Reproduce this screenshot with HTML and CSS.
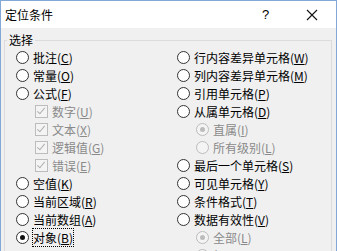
FILE: index.html
```html
<!DOCTYPE html>
<html lang="zh-CN">
<head>
    <meta charset="UTF-8">
    <title>定位条件</title>
    <link rel="stylesheet" href="styles.css">
</head>
<body>

<div class="dialog">
    <!-- Title bar -->
    <div class="titlebar">
        <span class="title">定位条件</span>
        <span class="help">?</span>
        <span class="close">
            <svg width="12" height="12" viewBox="0 0 12 12"><path d="M1 1L11 11M11 1L1 11" stroke="#111" stroke-width="1.1"/></svg>
        </span>
    </div>

    <div class="content">
        <div class="group">
            <span class="legend">选择</span>
            <div class="cols">
                <!-- Left column -->
                <div class="col left">
                    <div class="opt"><span class="radio"></span>批注(<u>C</u>)</div>
                    <div class="opt"><span class="radio"></span>常量(<u>O</u>)</div>
                    <div class="opt"><span class="radio"></span>公式(<u>F</u>)</div>
                    <div class="opt sub disabled"><span class="check"></span>数字(<u>U</u>)</div>
                    <div class="opt sub disabled"><span class="check"></span>文本(<u>X</u>)</div>
                    <div class="opt sub disabled"><span class="check"></span>逻辑值(<u>G</u>)</div>
                    <div class="opt sub disabled"><span class="check"></span>错误(<u>E</u>)</div>
                    <div class="opt"><span class="radio"></span>空值(<u>K</u>)</div>
                    <div class="opt"><span class="radio"></span>当前区域(<u>R</u>)</div>
                    <div class="opt"><span class="radio"></span>当前数组(<u>A</u>)</div>
                    <div class="opt"><span class="radio on"></span><span class="focus">对象(<u>B</u>)</span></div>
                </div>
                <!-- Right column -->
                <div class="col right">
                    <div class="opt"><span class="radio"></span>行内容差异单元格(<u>W</u>)</div>
                    <div class="opt"><span class="radio"></span>列内容差异单元格(<u>M</u>)</div>
                    <div class="opt"><span class="radio"></span>引用单元格(<u>P</u>)</div>
                    <div class="opt"><span class="radio"></span>从属单元格(<u>D</u>)</div>
                    <div class="opt sub disabled"><span class="radio on"></span>直属(<u>I</u>)</div>
                    <div class="opt sub disabled"><span class="radio"></span>所有级别(<u>L</u>)</div>
                    <div class="opt"><span class="radio"></span>最后一个单元格(<u>S</u>)</div>
                    <div class="opt"><span class="radio"></span>可见单元格(<u>Y</u>)</div>
                    <div class="opt"><span class="radio"></span>条件格式(<u>T</u>)</div>
                    <div class="opt"><span class="radio"></span>数据有效性(<u>V</u>)</div>
                    <div class="opt sub disabled"><span class="radio on"></span>全部(<u>L</u>)</div>
                    <div class="opt sub disabled"><span class="radio"></span>相同(<u>E</u>)</div>
                </div>
            </div>
        </div>
    </div>
</div>

</body>
</html>
```

FILE: styles.css
```css
body {
    margin: 0;
    font-family: "Noto Sans CJK SC", "Noto Sans", sans-serif;
    font-size: 12px;
    color: #000;
    background: #f0f0f0;
}

.dialog {
    width: 337px;
    height: 251px;
    box-sizing: border-box;
    border: 1px solid #83a8d8;
    border-bottom: none;
    background: #f0f0f0;
    overflow: hidden;
}

.titlebar {
    height: 27px;
    background: #fff;
    display: flex;
    align-items: center;
    padding-left: 4px;
}

.title {
    flex: 1;
    font-size: 12px;
}

.help {
    width: 20px;
    font-family: "Liberation Sans", sans-serif;
    font-size: 13px;
    margin-right: 24px;
}

.close {
    width: 30px;
    display: flex;
}

.content {
    padding: 5px 4px 0 3px;
}

.group {
    position: relative;
    border: 1px solid #dcdcdc;
    margin-top: 7px;
    height: 240px;
    padding: 7px 0 0 0;
}

.legend {
    position: absolute;
    top: -10px;
    left: 2px;
    padding: 0 2px;
    background: #f0f0f0;
    line-height: 18px;
}

.cols {
    display: flex;
}

.col {
    display: flex;
    flex-direction: column;
}

.col.left {
    width: 161px;
    padding-left: 11px;
}

.opt {
    height: 18px;
    display: flex;
    align-items: center;
    white-space: nowrap;
}

.opt u {
    text-decoration: underline;
    text-underline-offset: 1px;
}

.opt.sub {
    padding-left: 19px;
}

.disabled {
    color: #8a8a8a;
}

.radio {
    width: 11px;
    height: 11px;
    border: 1px solid #333;
    border-radius: 50%;
    background: #fff;
    margin-right: 4px;
    position: relative;
    flex: none;
}

.radio.on::after {
    content: "";
    position: absolute;
    left: 3px;
    top: 3px;
    width: 5px;
    height: 5px;
    border-radius: 50%;
    background: #111;
}

.disabled .radio {
    border-color: #bcbcbc;
    background: #f4f4f4;
}

.disabled .radio.on::after {
    background: #bcbcbc;
}

.check {
    width: 11px;
    height: 11px;
    border: 1px solid #bcbcbc;
    background: #f4f4f4;
    margin-right: 4px;
    position: relative;
    flex: none;
}

.check::after {
    content: "";
    position: absolute;
    left: 3px;
    top: 0px;
    width: 3px;
    height: 7px;
    border: solid #b0b0b0;
    border-width: 0 1.5px 1.5px 0;
    transform: rotate(40deg);
}

.focus {
    outline: 1px dotted #000;
    outline-offset: 0;
}
```
